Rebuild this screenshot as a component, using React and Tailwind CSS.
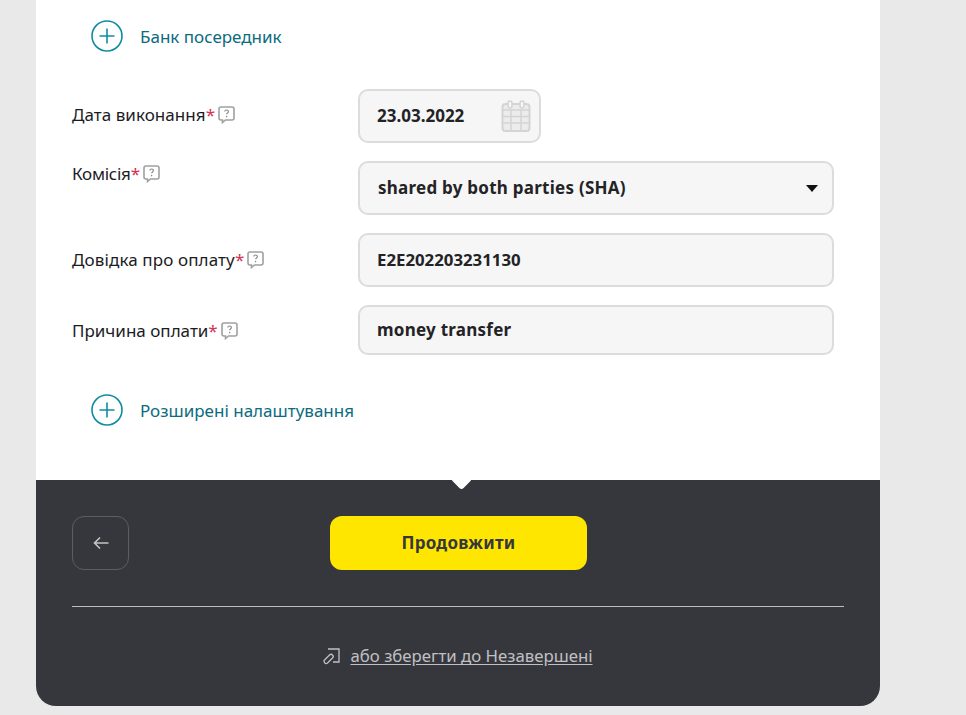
import React from "react";

const font = "font-['Noto_Sans','Liberation_Sans',sans-serif]";

const PlusRow = ({ text, className }) => (
  <div className={"flex items-center pl-[19px] " + className}>
    <svg width="32" height="32" viewBox="0 0 32 32" fill="none">
      <circle cx="16" cy="16" r="15" stroke="#0f8ca3" strokeWidth="1.6" />
      <path d="M16 8.5v15M8.5 16h15" stroke="#0f8ca3" strokeWidth="1.6" />
    </svg>
    <span className="ml-[17px] mt-[1px] text-[17px] leading-[24px] text-[#0b6b80]">{text}</span>
  </div>
);

const Hint = () => (
  <svg width="17" height="18" viewBox="0 0 17 18" fill="none" className="ml-[3px] mt-[3px] shrink-0">
    <path
      d="M3 1h11a2 2 0 0 1 2 2v9a2 2 0 0 1-2 2H7.500l-3 2.500V14H3a2 2 0 0 1-2-2V3a2 2 0 0 1 2-2z"
      stroke="#a0a0a0"
      strokeWidth="1.6"
    />
    <path d="M6.700 5.500c.2-1 1-1.500 1.900-1.500s1.800.6 1.800 1.600c0 1.300-1.800 1.400-1.800 2.700" stroke="#8a8a8a" strokeWidth="1.200" />
    <circle cx="8.600" cy="10.600" r=".8" fill="#8a8a8a" />
  </svg>
);

const Label = ({ text, className = "" }) => (
  <div className={"flex w-[286px] shrink-0 items-start text-[17px] leading-[24px] text-[#1c1c1f] " + className}>
    <span>{text}</span>
    <span className="text-[#d6304f]">*</span>
    <Hint />
  </div>
);

const Field = ({ children, className = "" }) => (
  <div className={"flex items-center rounded-[10px] border-2 border-[#dcdcdc] bg-[#f6f6f6] text-[17px] font-bold text-[#232326] " + className}>
    {children}
  </div>
);

const Calendar = () => (
  <svg width="30" height="32" viewBox="0 0 30 32" fill="none" className="ml-auto mr-[8px]">
    <rect x="1.500" y="4" width="27" height="27" rx="3" fill="#ececec" stroke="#d4d4d4" strokeWidth="2" />
    <path d="M2 10h26M2 16.500h26M2 23h26M10 10v20M20 10v20" stroke="#d4d4d4" strokeWidth="1.500" />
    <rect x="7" y="1" width="4" height="7" rx="2" fill="#f6f6f6" stroke="#d4d4d4" strokeWidth="1.500" />
    <rect x="19" y="1" width="4" height="7" rx="2" fill="#f6f6f6" stroke="#d4d4d4" strokeWidth="1.500" />
  </svg>
);

export default function App() {
  return (
    <div className={"h-[715px] overflow-hidden bg-[#e9e9e9] pl-[36px] " + font}>
      <div className="w-[844px]">
        <div className="h-[480px] bg-white pl-[36px] pt-[20px]">
          <PlusRow text="Банк посередник" className="h-[32px]" />

          <div className="mt-[37px] flex h-[54px] items-center">
            <Label text="Дата виконання" className="mt-[-2px] tracking-[0.05px]" />
            <Field className="h-[54px] w-[183px] pl-[17px]">
              23.03.2022
              <Calendar />
            </Field>
          </div>

          <div className="mt-[18px] flex h-[54px]">
            <Label text="Комісія" className="pt-[1px] tracking-[-0.25px]" />
            <Field className="h-[54px] w-[476px] justify-between pl-[18px] pr-[14px]">
              <span className="tracking-[0.25px]">shared by both parties (SHA)</span>
              <span className="h-0 w-0 border-x-[6px] border-t-[7px] border-x-transparent border-t-[#111]" />
            </Field>
          </div>

          <div className="mt-[18px] flex h-[54px] items-center">
            <Label text="Довідка про оплату" className="tracking-[0.12px]" />
            <Field className="h-[54px] w-[476px] pl-[17px]">
              <span className="text-[16.8px]">E2E202203231130</span>
            </Field>
          </div>

          <div className="mt-[18px] flex h-[50px] items-center">
            <Label text="Причина оплати" className="mt-[2px]" />
            <Field className="h-[50px] w-[476px] pl-[17px]">
              <span className="tracking-[0.25px]">money transfer</span>
            </Field>
          </div>

          <PlusRow text="Розширені налаштування" className="mt-[39px] h-[32px]" />
        </div>

        <div className="relative h-[226px] rounded-b-[20px] bg-[#36373c] px-[36px] pt-[36px]">
          <span className="absolute left-[418px] top-[-8px] h-[15px] w-[15px] rotate-45 rounded-[3px] bg-white" />

          <div className="flex">
            <button className="flex h-[54px] w-[57px] items-center justify-center rounded-[12px] border border-[#5d5e63]">
              <svg width="16" height="14" viewBox="0 0 16 14" fill="none">
                <path d="M15.500 7H1.500M7 1.500 1.500 7 7 12.500" stroke="#c4c4c4" strokeWidth="1.600" />
              </svg>
            </button>
            <button className="ml-[201px] h-[54px] w-[257px] rounded-[12px] bg-[#ffe600] text-[17px] font-bold tracking-[0.25px] text-[#36373c]">
              Продовжити
            </button>
          </div>

          <div className="mt-[36px] border-t border-[#bdbdc0]" />

          <div className="mt-[37px] flex items-center justify-center text-[16.8px] leading-[24px] text-[#c0c0c4]">
            <svg width="17" height="17" viewBox="0 0 17 17" fill="none" className="mr-[10px]">
              <path d="M5 1h11v13h-6" stroke="#c0c0c4" strokeWidth="1.300" />
              <path d="M1 12.500 6.500 7a2 2 0 0 1 3 3L4.500 15a2 2 0 0 1-3-.3z" stroke="#c0c0c4" strokeWidth="1.300" />
            </svg>
            <span className="underline underline-offset-2">або зберегти до Незавершені</span>
          </div>
        </div>
      </div>
    </div>
  );
}
